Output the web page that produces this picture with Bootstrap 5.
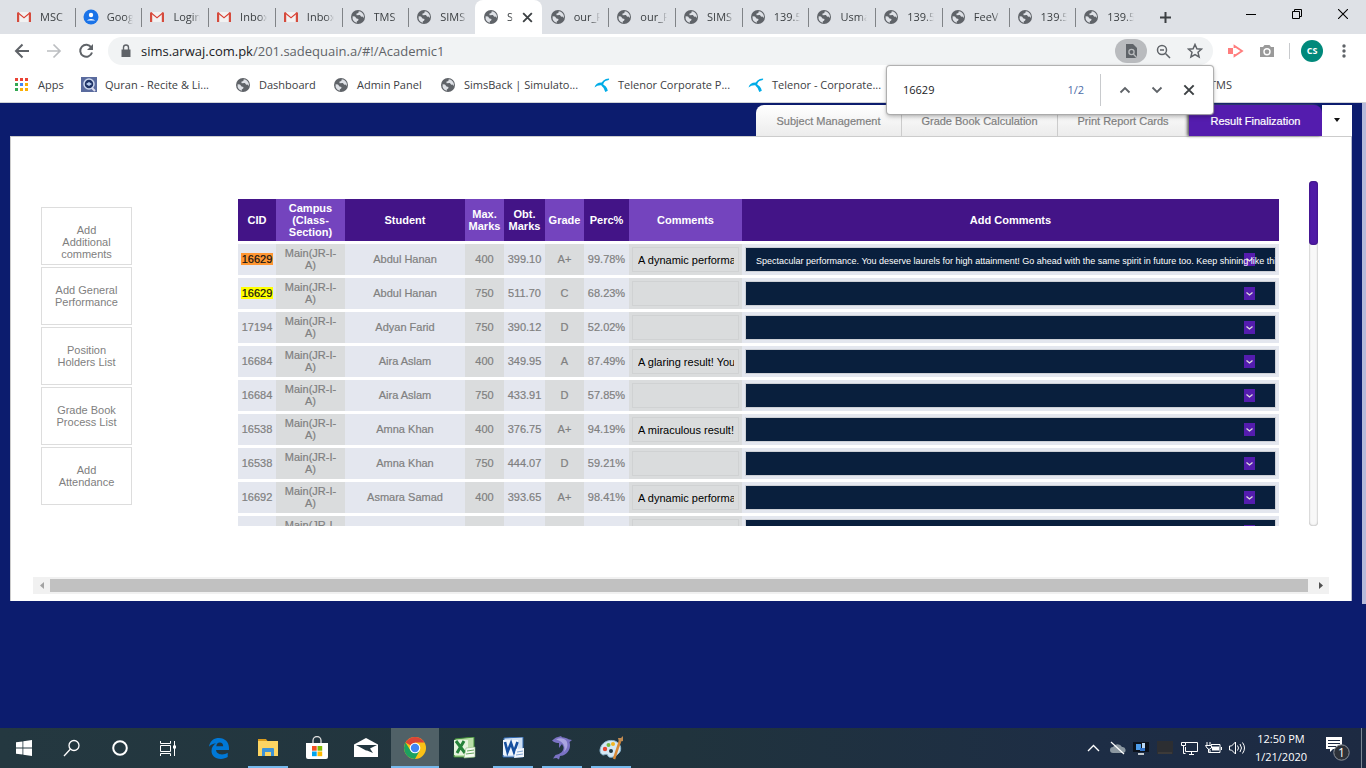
<!DOCTYPE html>
<html lang="en">
<head>
<meta charset="utf-8">
<meta name="viewport" content="width=device-width, initial-scale=1">
<title>SIMS - Academic</title>
<link rel="stylesheet" href="https://cdn.jsdelivr.net/npm/bootstrap@5.3.0/dist/css/bootstrap.min.css">
<style>
  :root { --ui: "Open Sans", "Noto Sans", sans-serif; --page: "Liberation Sans", Arial, sans-serif; }
  body { font-family: var(--ui); font-size: 11px; line-height: 16px; color: #3c4043; background: #0c1c6e; }
  svg { display: block; flex: none; }
  a { color: inherit; text-decoration: none; }
  button { border: 0; padding: 0; background: none; color: inherit; font: inherit; }

  /* browser tabs */
  .tabstrip { height: 34px; background: #dee1e6; padding-left: 8px; }
  .tabset { min-width: 0; }
  .btab { flex: 1 1 0; min-width: 0; padding: 0 8px; gap: 8px; position: relative; height: 34px; white-space: nowrap; text-align: left; }
  .btab + .btab:not(.live)::before { content: ""; position: absolute; left: 0; top: 8px; height: 19px; width: 1px; background: #808387; }
  .btab.live + .btab::before { display: none; }
  .btab.live { background: #fff; border-radius: 8px 8px 0 0; }
  .btab .cap { flex: 1; min-width: 0; overflow: hidden; -webkit-mask-image: linear-gradient(90deg, #000 70%, transparent); mask-image: linear-gradient(90deg, #000 70%, transparent); }
  .wincontrols { width: 224px; flex: none; color: #111; }
  .plus { width: 46px; }
  .winbtn { width: 46px; height: 28px; }

  /* toolbar */
  .toolbar { height: 34px; background: #fff; padding: 0 6px; }
  .tool { width: 32px; height: 28px; }
  .omni { height: 28px; border-radius: 14px; background: #f1f3f4; padding: 0 2px 0 11px; margin: 0 6px; }
  .url { font-size: 13px; color: #5f6368; }
  .url b { font-weight: 400; color: #202124; }
  .pill { height: 24px; border-radius: 12px; background: #b9bbbe; }
  .avatar { width: 22px; height: 22px; background: #00897b; color: #fff; font-size: 9px; font-weight: 700; margin: 0 5px; }
  .vbar { width: 1px; height: 16px; background: #c8cacd; }
  .toolbar .vbar { margin: 0 6px; }
  .findbar .vbar { height: 32px; }
  .tally { color: #4d6da8; }

  .bookmarks { height: 35px; background: #fff; padding-left: 14px; border-bottom: 1px solid #cfd2d6; display: grid; grid-template-columns: 66px 155px 98px 107px 154px 154px 446px 1fr; white-space: nowrap; }
  .bookmarks a { gap: 8px; }

  .findbar { right: 153px; top: 66px; width: 326px; height: 48px; background: #fff; border-radius: 3px; box-shadow: 0 0 1px 1px #aaa, 0 2px 5px rgba(0,0,0,.35); padding: 0 8px 0 16px; z-index: 5; }
  .findbar input { border: 0; padding: 0; outline: 0; flex: 1; min-width: 0; font: inherit; color: #202124; }

  /* application page */
  .app { font-family: var(--page); font-size: 11px; line-height: 12px; color: #808080; padding: 2px 0 0 10px; flex: 1; }
  .workspace { min-width: 0; }
  .navtabs { height: 31px; }
  .navtabs button { background: linear-gradient(#fff, #ececec); border-right: 1px solid #ccc; -webkit-text-stroke: .2px; }
  .nt1 { width: 146px; border-radius: 8px 0 0 0; }
  .nt2 { width: 156px; }
  .nt3 { width: 131px; }
  .navtabs .nt4 { width: 133px; background: #541cae; color: #fff; border: 0; border-radius: 0 8px 0 0; box-shadow: -2px 0 3px #666; }
  .navtabs .nt5 { width: 30px; background: #fff; border: 0; }
  .panel { background: #fff; border-top: 1px solid #ccc; border-right: 1px solid #b8bcd0; border-left: 1px solid #ccc; padding: 44px 22px 7px; }
  .pagebar { flex: none; width: 4px; height: 501px; background: #b6badb; margin-left: 10px; margin-top: -2px; }
  .side { width: 91px; margin: 26px 0 0 8px; gap: 2px; }
  .side button { height: 58px; border: 1px solid #ddd; padding: 16px 12px 0; display: flex; align-items: flex-start; justify-content: center; text-align: center; }
  .tablebox { height: 327px; margin: 18px 30px 0 106px; overflow: hidden; flex: 1; min-width: 0; }
  .results { width: 100%; table-layout: fixed; border-collapse: separate; border-spacing: 0; text-align: center; font-size: 11px; line-height: 12px; }
  .results th { height: 45px; border-bottom: 3px solid #fff; background: #431487; color: #fff; padding: 0; }
  .results th:nth-child(even) { background: #7444be; }
  .results td { height: 34px; border-bottom: 3px solid #fff; background: #e4e7ef; padding: 0 0 2px; -webkit-text-stroke: .2px; }
  .results td:nth-child(n+8) { padding: 0 3px; -webkit-text-stroke: 0; }
  .results td:nth-child(even) { background: #dadcdd; }
  .results .hit, .results .hit2 { color: #111; background: #ff9632; padding: 0 1px; }
  .results .hit2 { background: #ff0; }
  .results input { display: block; width: 100%; height: 25px; border: 1px solid #d0d2d3; background: #dadcdd; color: #000; padding: 0 4px 0 5px; font: inherit; }
  .results select { display: block; width: 100%; height: 25px; appearance: none; border: 1px solid #cdd0d6; border-radius: 0; color: #fff; padding: 2px 0 0 10px; font: inherit; font-size: 9px;
    background: #091f3d url("data:image/svg+xml,%3Csvg xmlns='http://www.w3.org/2000/svg' width='11' height='13'%3E%3Crect width='11' height='13' fill='%23541cae'/%3E%3Cpath d='m2.500 5.500 3 2.500 3-2.500' fill='none' stroke='%23ddd' stroke-width='1.300'/%3E%3C/svg%3E") no-repeat right 20px center; }
  .vtrack { width: 9px; height: 345px; border-radius: 4px; background: #f8f8f8; box-shadow: inset 0 0 2px #888; margin-right: 11px; }
  .vthumb { height: 64px; border-radius: 4px; background: #4f1ba6; box-shadow: inset 0 0 2px #2a0d60; }
  .hscroll { height: 17px; background: #f1f1f1; margin-top: 51px; }
  .hscroll button { width: 17px; height: 17px; }
  .hthumb { height: 13px; background: #c1c1c1; }

  /* taskbar */
  .taskbar { height: 40px; background: linear-gradient(90deg, #243840, #20333d 50%, #1d2d45 80%, #1d2a42); color: #fff; }
  .tk { width: 48px; height: 40px; }
  .apps { gap: 1px; margin-left: 3px; }
  .open { position: relative; }
  .open::after { content: ""; position: absolute; left: 4px; right: 4px; bottom: 0; height: 2px; background: #76b9ed; }
  .front { background: #506167; }
  .front::after { left: 0; right: 0; }
  .tr { width: 24px; height: 40px; }
  .clock { width: 64px; line-height: 18px; }
  .desk { width: 5px; border-left: 1px solid #7b8794; }
</style>
</head>
<body class="min-vh-100 d-flex flex-column">

<svg width="0" height="0" class="position-absolute" aria-hidden="true">
  <symbol id="globe" viewBox="0 0 16 16"><circle cx="8" cy="8" r="7" fill="#5f6368"/><path d="M2.600 7.200 5 7.600l1.500 1.800 2 .5-.3 1.500-1.500 1.100.3 1.300A6 6 0 0 1 2.600 7.200zM8.800 2.300l-.5 1.700-2 .8.4 1.500 3.200-.2 1.300 1.600 1.300-.3.9 1.400.6-.6a5.800 5.800 0 0 0-5.200-5.900z" fill="#dee1e6"/></symbol>
  <symbol id="gmail" viewBox="0 0 16 16"><path d="M2 3h12v10H2z" fill="#f2f2f2"/><path d="m2 4.500 6 5 6-5V3L8 8 2 3z" fill="#d93f33"/><path d="M1 3.500h2.200V13H1zM12.800 3.500H15V13h-2.200z" fill="#d54b3d"/></symbol>
  <symbol id="telenor" viewBox="0 0 16 16"><path d="M7 8Q8 2 15 1.500q.8 1.700-2 2Q9.500 4.200 9.200 8zM.5 10.500Q2 5 8.500 5.500L8 8.300Q4 7.500.5 10.500zM7.500 6.800Q13 9 13.800 13.800L11.300 15Q10.500 11 7.500 8.800z" fill="#00ace7"/></symbol>
  <symbol id="cross" viewBox="0 0 12 12"><path d="m2 2 8 8M10 2l-8 8" stroke="currentColor" stroke-width="1.700" fill="none"/></symbol>
</svg>

<header class="position-relative">
  <div class="tabstrip d-flex">
    <div class="tabset d-flex flex-grow-1" id="tabs"></div>
    <div class="wincontrols d-flex">
      <button class="plus d-flex align-items-center justify-content-center" aria-label="New tab"><svg width="13" height="13"><path d="M6.500 1v11M1 6.500h11" stroke="#3c4043" stroke-width="2"/></svg></button>
      <div class="ms-auto d-flex">
        <button class="winbtn d-flex align-items-center justify-content-center" aria-label="Minimize"><svg width="10" height="10"><path d="M0 5.500h10" stroke="#000"/></svg></button>
        <button class="winbtn d-flex align-items-center justify-content-center" aria-label="Restore"><svg width="10" height="10"><path d="M.5 2.500h7v7h-7zM2.500 2.500v-2h7v7h-2" fill="none" stroke="#000"/></svg></button>
        <button class="winbtn d-flex align-items-center justify-content-center" aria-label="Close"><svg width="10" height="10"><path d="m0 0 10 10M10 0 0 10" stroke="#000" stroke-width="1.100"/></svg></button>
      </div>
    </div>
  </div>

  <div class="toolbar d-flex align-items-center">
    <button class="tool d-flex align-items-center justify-content-center" aria-label="Back"><svg width="16" height="16" fill="none" stroke="#5f6368" stroke-width="2"><path d="M15 8H2.500M8.500 1.500 2 8l6.500 6.500"/></svg></button>
    <button class="tool d-flex align-items-center justify-content-center" aria-label="Forward"><svg width="16" height="16" fill="none" stroke="#bcbec1" stroke-width="1.700"><path d="M1 8h12.500M7.500 1.500 14 8l-6.500 6.500"/></svg></button>
    <button class="tool d-flex align-items-center justify-content-center" aria-label="Reload"><svg width="16" height="16"><path d="M13.300 4.500A6 6 0 1 0 14 9.500" fill="none" stroke="#5f6368" stroke-width="2"/><path d="M15 1v6H9z" fill="#5f6368"/></svg></button>
    <div class="omni d-flex align-items-center flex-grow-1">
      <svg width="14" height="14" class="me-2"><path d="M2.500 5.500h9V13h-9z" fill="#5f6368"/><path d="M4.500 6V3.500a2.500 2.500 0 0 1 5 0V6" fill="none" stroke="#5f6368" stroke-width="1.400"/></svg>
      <a class="url flex-grow-1" href="#"><b>sims.arwaj.com.pk</b>/201.sadequain.a/#!/Academic1</a>
      <button class="tool pill d-flex align-items-center justify-content-center" aria-label="Find in page"><svg width="14" height="14"><path d="M2 0h7l4 4v10H2z" fill="#5f6368"/><circle cx="7.500" cy="8" r="2.600" fill="none" stroke="#b9bbbe" stroke-width="1.300"/><path d="m9.300 10 3.500 3.700" stroke="#b9bbbe" stroke-width="1.300"/></svg></button>
      <button class="tool d-flex align-items-center justify-content-center" aria-label="Zoom"><svg width="15" height="15" fill="none" stroke="#5f6368" stroke-width="1.500"><circle cx="6" cy="6" r="4.500"/><path d="m9.500 9.500 4.500 4.500M4 6h4"/></svg></button>
      <button class="tool d-flex align-items-center justify-content-center" aria-label="Bookmark"><svg width="16" height="16"><path d="m8 1.500 1.900 4.300 4.600.4-3.500 3.100 1.100 4.600L8 11.500l-4.100 2.400L5 9.300 1.500 6.200l4.600-.4z" fill="none" stroke="#5f6368" stroke-width="1.500"/></svg></button>
    </div>
    <button class="tool d-flex align-items-center justify-content-center" aria-label="Recorder"><svg width="17" height="14"><path d="M1 4h5v6H1z" fill="#ff7d7d"/><path d="M7.500 4V2L15 7l-7.500 5v-2" fill="none" stroke="#ff7d7d" stroke-width="1.800"/></svg></button>
    <button class="tool d-flex align-items-center justify-content-center" aria-label="Screenshot"><svg width="16" height="14"><path d="M1 3h3l1.500-2h5L12 3h3v10H1z" fill="#9a9a9a"/><circle cx="8" cy="7.800" r="3" fill="#9a9a9a" stroke="#fff" stroke-width="1.400"/></svg></button>
    <span class="vbar"></span>
    <button class="avatar rounded-circle d-flex align-items-center justify-content-center">CS</button>
    <button class="tool d-flex align-items-center justify-content-center" aria-label="Menu"><svg width="4" height="14" fill="#5f6368"><circle cx="2" cy="2" r="1.700"/><circle cx="2" cy="7" r="1.700"/><circle cx="2" cy="12" r="1.700"/></svg></button>
  </div>

  <nav class="bookmarks align-items-center">
    <a href="#" class="d-flex align-items-center"><svg width="16" height="14"><g fill="#ea4335"><path d="M1 0h3v3H1zM6 0h3v3H6zM11 0h3v3h-3z"/></g><path d="M1 5h3v3H1z" fill="#34a853"/><path d="M6 5h3v3H6z" fill="#4285f4"/><path d="M11 5h3v3h-3zM6 10h3v3H6zM11 10h3v3h-3z" fill="#fbaf05"/><path d="M1 10h3v3H1z" fill="#34a853"/></svg>Apps</a>
    <a href="#" class="d-flex align-items-center"><svg width="17" height="16"><rect width="16" height="15" x="1" fill="#5a6b9e"/><circle cx="9" cy="7" r="5" fill="#203466" stroke="#cdd8ee" stroke-width="1.500"/><path d="m6 7 3-2 3 2-3 2z" fill="#b8ccee"/><path d="m12 11 3 3" stroke="#dde" stroke-width="2"/></svg>Quran - Recite &amp; Li...</a>
    <a href="#" class="d-flex align-items-center"><svg width="16" height="16"><use href="#globe"/></svg>Dashboard</a>
    <a href="#" class="d-flex align-items-center"><svg width="16" height="16"><use href="#globe"/></svg>Admin Panel</a>
    <a href="#" class="d-flex align-items-center"><svg width="16" height="16"><use href="#globe"/></svg>SimsBack | Simulato...</a>
    <a href="#" class="d-flex align-items-center"><svg width="16" height="16"><use href="#telenor"/></svg>Telenor Corporate P...</a>
    <a href="#" class="d-flex align-items-center"><svg width="16" height="16"><use href="#telenor"/></svg>Telenor - Corporate...</a>
    <a href="#" class="d-flex align-items-center ps-3">TMS</a>
  </nav>

  <div class="findbar position-absolute d-flex align-items-center">
    <input type="text" value="16629" aria-label="Find">
    <span class="tally me-3">1/2</span>
    <span class="vbar me-2"></span>
    <button class="tool d-flex align-items-center justify-content-center" aria-label="Previous"><svg width="12" height="12" fill="none" stroke="#5f6368" stroke-width="1.800"><path d="m1.500 8.500 4.500-4.500 4.500 4.500"/></svg></button>
    <button class="tool d-flex align-items-center justify-content-center" aria-label="Next"><svg width="12" height="12" fill="none" stroke="#5f6368" stroke-width="1.800"><path d="m1.500 3.500 4.500 4.500 4.500-4.500"/></svg></button>
    <button class="tool d-flex align-items-center justify-content-center" aria-label="Close find"><svg width="14" height="14"><use href="#cross"/></svg></button>
  </div>
</header>

<main class="app d-flex align-items-start">
  <div class="workspace flex-grow-1">
    <div class="navtabs d-flex justify-content-end">
      <button class="nt1">Subject Management</button>
      <button class="nt2">Grade Book Calculation</button>
      <button class="nt3">Print Report Cards</button>
      <button class="nt4">Result Finalization</button>
      <button class="nt5 d-flex align-items-center justify-content-center" aria-label="More tabs"><svg width="8" height="5"><path d="M1 0h6L4 4z" fill="#111"/></svg></button>
    </div>
    <div class="panel">
      <div class="d-flex align-items-start">
        <div class="side d-flex flex-column">
          <button>Add Additional comments</button>
          <button>Add General Performance</button>
          <button>Position Holders List</button>
          <button>Grade Book Process List</button>
          <button>Add Attendance</button>
        </div>
        <div class="tablebox">
          <table class="results">
            <colgroup><col width="38"><col width="69"><col width="120"><col width="39"><col width="41"><col width="39"><col width="45"><col width="113"><col></colgroup>
            <thead><tr><th>CID</th><th>Campus<br>(Class-<br>Section)</th><th>Student</th><th>Max. Marks</th><th>Obt. Marks</th><th>Grade</th><th>Perc%</th><th>Comments</th><th>Add Comments</th></tr></thead>
            <tbody id="rows"></tbody>
          </table>
        </div>
        <div class="vtrack"><div class="vthumb"></div></div>
      </div>
      <div class="hscroll d-flex align-items-center">
        <button class="d-flex align-items-center justify-content-center" aria-label="Scroll left"><svg width="4" height="7"><path d="M4 0v7L0 3.500z" fill="#a3a3a3"/></svg></button>
        <div class="hthumb flex-grow-1 me-1"></div>
        <button class="d-flex align-items-center justify-content-center" aria-label="Scroll right"><svg width="4" height="7"><path d="M0 0v7l4-3.500z" fill="#505050"/></svg></button>
      </div>
    </div>
  </div>
  <div class="pagebar"></div>
</main>

<footer class="taskbar d-flex">
  <button class="tk d-flex align-items-center justify-content-center" aria-label="Start"><svg width="16" height="16" fill="#fff"><path d="M0 2.300 6.500 1.400v6.200H0zM7.300 1.300 16 0v7.600H7.300zM0 8.400h6.500v6.200L0 13.700zM7.300 8.400H16V16l-8.700-1.300z"/></svg></button>
  <button class="tk d-flex align-items-center justify-content-center" aria-label="Search"><svg width="18" height="18" fill="none" stroke="#fff" stroke-width="1.300"><circle cx="11" cy="6.500" r="5"/><path d="M7.500 10 1 17"/></svg></button>
  <button class="tk d-flex align-items-center justify-content-center" aria-label="Cortana"><svg width="18" height="18"><circle cx="9" cy="9" r="6.800" fill="none" stroke="#fff" stroke-width="2"/></svg></button>
  <button class="tk d-flex align-items-center justify-content-center" aria-label="Task view"><svg width="17" height="17" fill="none" stroke="#fff"><path d="M.5 1v2.500h10V1M.5 5.500h10v6H.5zM.5 16v-2.500h10V16M14.500 1v15"/><path d="M13 5.500h3v3h-3z" fill="#fff" stroke="none"/></svg></button>
  <div class="apps d-flex">
    <button class="tk d-flex align-items-center justify-content-center" aria-label="Edge"><svg width="22" height="22"><path d="M1 9.800C2 3.500 6.300 1 11 1c6 0 10 4.300 10 10v2H8c.3 3 3 4.400 6 4.400 2.200 0 4-.6 5.700-1.600v4.300C17.800 21.200 15.500 22 13 22 6.500 22 3.500 18 3.500 14c0-4 2.200-6.500 4.500-7.800C4.800 6.400 2.300 8 1 9.800zM8.300 9.300h6.900c0-2.300-1.200-3.800-3.500-3.800-2 0-3.200 1.600-3.400 3.800z" fill="#0078d7" fill-rule="evenodd"/></svg></button>
    <button class="tk open d-flex align-items-center justify-content-center" aria-label="Explorer"><svg width="22" height="20"><path d="M1 1h8l1.500 2H1z" fill="#d99b1c"/><path d="M1 3h20v15H1z" fill="#fcd462"/><path d="M5 18v-7q0-1 1-1h10q1 0 1 1v7h-3v-4H8v4z" fill="#3d93d7"/></svg></button>
    <button class="tk d-flex align-items-center justify-content-center" aria-label="Store"><svg width="24" height="24"><path d="M8 7V4.500a4 4 0 0 1 8 0V7" fill="none" stroke="#ddd" stroke-width="1.300"/><path d="M1 7h22v14q0 2-2 2H3q-2 0-2-2z" fill="#fff"/><path d="M7 10h4.700v4.700H7z" fill="#f25022"/><path d="M12.500 10h4.700v4.700h-4.700z" fill="#7fba00"/><path d="M7 15.500h4.700v4.700H7z" fill="#00a4ef"/><path d="M12.500 15.500h4.700v4.700h-4.700z" fill="#ffb900"/></svg></button>
    <button class="tk d-flex align-items-center justify-content-center" aria-label="Mail"><svg width="24" height="20"><path d="M0 6.500 12 0l12 6.500V19H0z" fill="#fff"/><path d="m2 7 10 5.500 1 0L19 15l-3-4.500L23 7z" fill="#223740"/></svg></button>
    <button class="tk open front d-flex align-items-center justify-content-center" aria-label="Chrome"><svg width="22" height="22"><circle cx="11" cy="11" r="11" fill="#fbc116"/><path d="M11 11 1.500 5.500A11 11 0 0 1 20.500 5.500H11z" fill="#db4437"/><path d="M1.500 5.500A11 11 0 0 0 11 22l4.500-8.300L11 11l-4.500 2.500z" fill="#1da160"/><circle cx="11" cy="11" r="5.300" fill="#fff"/><circle cx="11" cy="11" r="4.200" fill="#4285f4"/></svg></button>
    <button class="tk d-flex align-items-center justify-content-center" aria-label="Excel"><svg width="23" height="22"><path d="M2 2 21 0v20H1z" fill="#b9dfa8" stroke="#3e8a37"/><path d="M1 3h14v15H1z" fill="#e7f4df"/><path d="m3 4 9 12M11 4 4 16" stroke="#26823a" stroke-width="3"/><path d="m13 11 9-1v10l-11 1z" fill="#f4faf0" stroke="#8fbb82" stroke-width=".6"/><path d="m14 14 7-1M13 17l8-1" stroke="#65a35c"/></svg></button>
    <button class="tk open d-flex align-items-center justify-content-center" aria-label="Word"><svg width="23" height="22"><path d="M2 1 21 0v20H1z" fill="#cfe0f4" stroke="#2d66b0"/><path d="M1 3h15v15H1z" fill="#eff5fc"/><path d="m3 5 2.500 10L9 6l3 9L15.500 5" fill="none" stroke="#164f9f" stroke-width="2.600"/><path d="m14 12 8-1v9l-10 1z" fill="#f2f6fc"/><path d="m15 15 6-1M14 18l7-1" stroke="#7da3d3"/></svg></button>
    <button class="tk open d-flex align-items-center justify-content-center" aria-label="Dolphin"><svg width="24" height="24"><path d="M2 4.500C4 3 5 1.500 8 1l3-1 1 1.200c3 .3 5 1 6.500 2L22 4l-2.500 2c1.800 6-1 11-6.500 13.500L10 20l-1 3.500L6.500 22 3 22.500 5.500 19c5-1 8.500-4 8-8l-1.500-3-3 4 0-5C6.500 7 4 6.500 2 4.500z" fill="#7a72c4"/><path d="M6 3.500c4-2 8-1.500 10.500 1.500 2 4 .5 8-2.500 11 1.500-5 .5-10-8-12.500z" fill="#aaa5e0"/></svg></button>
    <button class="tk open d-flex align-items-center justify-content-center" aria-label="Paint"><svg width="25" height="24"><path d="M1 14C2 6 10 3 16 5c7 3 7 10 3 13-4 4-9 4-10 2-1-3-3-1-5-1-2-1-3-2-3-5z" fill="#d4e8f5" stroke="#8db8d2"/><circle cx="6" cy="13" r="2.200" fill="#e54832"/><circle cx="9.500" cy="9" r="2" fill="#73b943"/><circle cx="14" cy="8" r="2" fill="#f2b521"/><circle cx="12" cy="15" r="2" fill="#223740"/><path d="m15 23 6-18" stroke="#d98835" stroke-width="2.500"/><path d="m20 6-1-4 3 0 2-2v5z" fill="#bf8a51"/></svg></button>
  </div>
  <div class="ms-auto d-flex">
    <button class="tr d-flex align-items-center justify-content-center" aria-label="Hidden icons"><svg width="13" height="8"><path d="m1 7 5.500-5.500L12 7" fill="none" stroke="#fff" stroke-width="1.400"/></svg></button>
    <button class="tr d-flex align-items-center justify-content-center" aria-label="OneDrive"><svg width="17" height="14"><path d="M4 12a3 3 0 0 1 0-6 5 5 0 0 1 9 0 3 3 0 0 1 1 6z" fill="#8b97a0"/><path d="m2 1 13 12" stroke="#fff" stroke-width="1.200"/></svg></button>
    <button class="tr d-flex align-items-center justify-content-center" aria-label="Network monitor"><svg width="16" height="15"><path d="M0 1h16v10H0z" fill="#0b111b"/><path d="M3 3h5v6H3z" fill="#4c9be8"/><path d="M9 2h3v5H9z" fill="#b9d8f6"/><path d="M7 7h5v3H7z" fill="#2e71c9"/><path d="M5 12h6v2H5z" fill="#c1c8ce"/></svg></button>
    <button class="tr d-flex align-items-center justify-content-center" aria-label="Display"><svg width="16" height="14"><path d="M0 0h16v13H0z" fill="#2c2e32"/><path d="M1 12h14" stroke="#4c4740"/></svg></button>
    <button class="tr d-flex align-items-center justify-content-center" aria-label="Ethernet"><svg width="17" height="15" fill="none" stroke="#fff"><path d="M4.500 3V1.500h12v9H4.500V6M8 13.500h5M10.500 10.500v3M.5 1.500h4v3h-4zM2.500 4.500v8h2"/></svg></button>
    <button class="tr d-flex align-items-center justify-content-center" aria-label="Battery"><svg width="17" height="13" fill="none" stroke="#fff"><path d="M6 2.500h9v8H5V8M2 0v3M5 0v3M.5 3.500h6V6L4 7.500 2 6zM3.500 7v3.500h2M16.500 5v3"/><path d="M7 4.500h7v4H7z" fill="#fff" stroke="none"/></svg></button>
    <button class="tr d-flex align-items-center justify-content-center" aria-label="Volume"><svg width="17" height="14" fill="none" stroke="#fff"><path d="M.5 5v4h2L6.500 13V1L2.500 5zM8.500 4.500q2 2.500 0 5M11 3q3 4 0 8M13.500 1.500q4 5.500 0 11"/></svg></button>
    <div class="clock text-center d-flex flex-column justify-content-center"><span>12:50 PM</span><span>1/21/2020</span></div>
    <button class="tk d-flex align-items-center justify-content-center" aria-label="Notifications, 1 new"><svg width="25" height="25" viewBox="0 0 25 25"><path d="M1 1h16v12H8l-3 3v-3H1z" fill="#fff"/><path d="M3 4.500h12M3 7.500h12M3 10.500h8" stroke="#1d2a42"/><circle cx="16.500" cy="16.500" r="7.700" fill="#2d3138" stroke="#8d9299"/><text x="16.500" y="21" text-anchor="middle" font-size="12" font-family="Open Sans" fill="#fff">1</text></svg></button>
    <div class="desk"></div>
  </div>
</footer>

<script src="https://cdn.jsdelivr.net/npm/bootstrap@5.3.0/dist/js/bootstrap.bundle.min.js"></script>
<script>
  const tabs = [['gmail','MSC'],['user','Goog'],['gmail','Login'],['gmail','Inbox'],['gmail','Inbox'],['globe','TMS'],['globe','SIMS'],['live','SI'],
    ['globe','our_F'],['globe','our_F'],['globe','SIMS'],['globe','139.5'],['globe','Usma'],['globe','139.5'],['globe','FeeV'],['globe','139.5'],['globe','139.5']];
  const userIcon = '<svg width="16" height="16"><circle cx="8" cy="8" r="7.500" fill="#1a73e8"/><circle cx="8" cy="6" r="2.200" fill="#fff"/><path d="M3.800 11.500a5 3.500 0 0 1 8.400 0z" fill="#fff"/></svg>';
  document.getElementById('tabs').innerHTML = tabs.map(([icon, name]) => {
    const live = icon === 'live';
    const pic = icon === 'user' ? userIcon : `<svg width="16" height="16"><use href="#${live ? 'globe' : icon}"/></svg>`;
    return `<button class="btab d-flex align-items-center ${live ? 'live' : ''}">${pic}<span class="cap">${name}</span>${live ? '<svg width="13" height="13"><use href="#cross"/></svg>' : ''}</button>`;
  }).join('');

  const praise = 'Spectacular performance. You deserve laurels for high attainment! Go ahead with the same spirit in future too. Keep shining like this!';
  const results = [
    ['16629','Abdul Hanan',400,'399.10','A+','99.78%','A dynamic performance',praise],
    ['16629','Abdul Hanan',750,'511.70','C','68.23%'],
    ['17194','Adyan Farid',750,'390.12','D','52.02%'],
    ['16684','Aira Aslam',400,'349.95','A','87.49%','A glaring result! You'],
    ['16684','Aira Aslam',750,'433.91','D','57.85%'],
    ['16538','Amna Khan',400,'376.75','A+','94.19%','A miraculous result!'],
    ['16538','Amna Khan',750,'444.07','D','59.21%'],
    ['16692','Asmara Samad',400,'393.65','A+','98.41%','A dynamic performance'],
    ['','','','','','']
  ];
  document.getElementById('rows').innerHTML = results.map(([id, name, max, got, grade, pct, note = '', extra = ''], i) => `<tr>
    <td>${i < 2 ? `<mark class="${i ? 'hit2' : 'hit'}">${id}</mark>` : id}</td><td>Main(JR-I-<br>A)</td><td>${name}</td><td>${max}</td><td>${got}</td><td>${grade}</td><td>${pct}</td>
    <td><input type="text" value="${note}" aria-label="Comment"></td><td><select aria-label="Add comment"><option>${extra}</option></select></td></tr>`).join('');
</script>
</body>
</html>
